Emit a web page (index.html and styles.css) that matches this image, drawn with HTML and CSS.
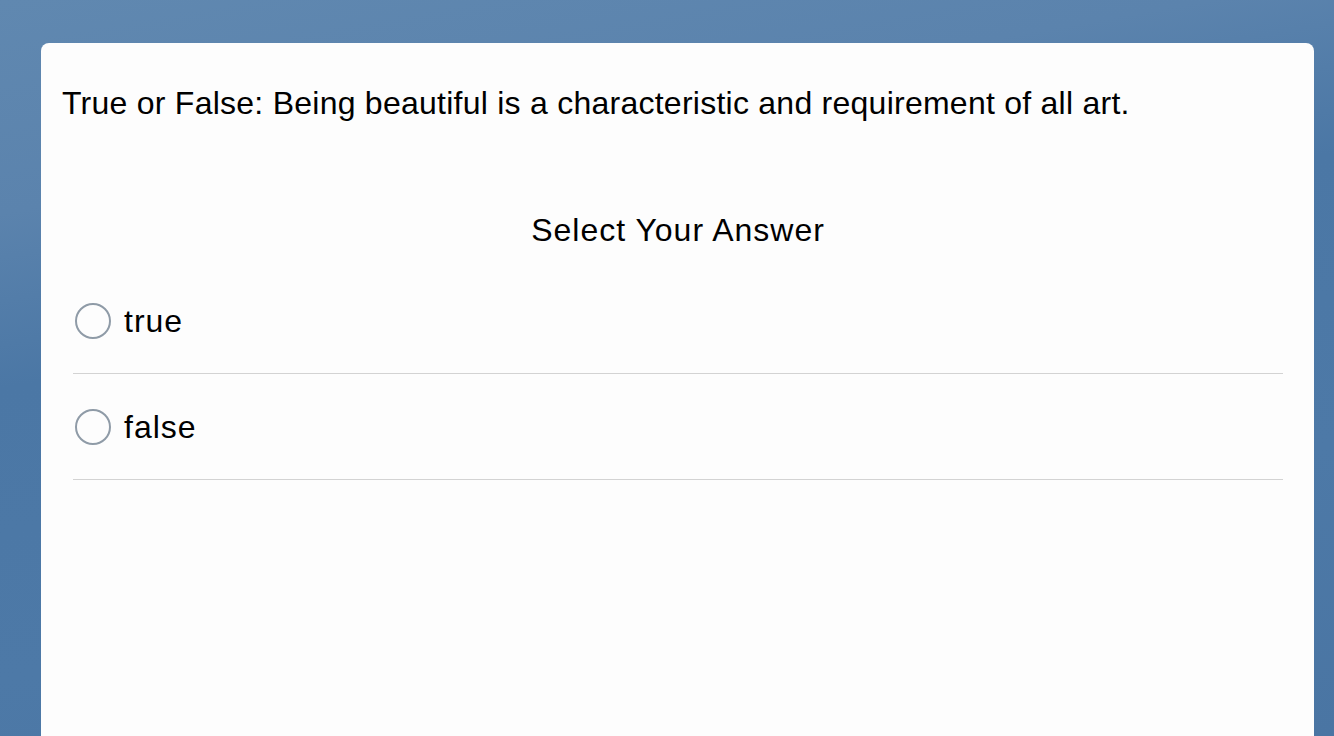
FILE: index.html
```html
<!DOCTYPE html>
<html>
<head>
<meta charset="utf-8">
<link rel="stylesheet" href="styles.css">
</head>
<body>
<div class="page">
  <div class="card">
    <p class="question">True or False: Being beautiful is a characteristic and requirement of all art.</p>
    <h2 class="prompt">Select Your Answer</h2>
    <ul class="options">
      <li class="option"><span class="radio"></span><span class="label">true</span></li>
      <li class="option"><span class="radio"></span><span class="label">false</span></li>
    </ul>
  </div>
</div>
</body>
</html>
```

FILE: styles.css
```css
html, body {
  margin: 0;
  padding: 0;
  height: 100%;
  overflow: hidden;
}
body {
  background: linear-gradient(170deg, #6088b0 0%, #5b83ad 22%, #4b77a5 40%, #4d79a7 70%, #4a75a3 100%);
  font-family: "Liberation Sans", Arial, sans-serif;
  color: #000;
}
.page {
  padding: 43px 20px 0 41px;
  height: 100%;
  box-sizing: border-box;
}
.card {
  background: #fdfdfd;
  border-radius: 8px 8px 0 0;
  height: 100%;
  padding: 41px 31px 0 21px;
  box-sizing: border-box;
}
.question {
  margin: 0;
  font-size: 32px;
  line-height: 38px;
  letter-spacing: 0.25px;
}
.prompt {
  margin: 89px 0 0 11px;
  font-size: 32px;
  font-weight: normal;
  line-height: 38px;
  text-align: center;
  letter-spacing: 1px;
}
.options {
  list-style: none;
  margin: 19px 0 0 11px;
  padding: 0;
}
.option {
  display: flex;
  align-items: center;
  height: 106px;
  box-sizing: border-box;
  border-bottom: 1px solid #d3d3d3;
  gap: 13px;
  padding-left: 2px;
}
.radio {
  width: 32px;
  height: 32px;
  border: 2px solid #8f9ba7;
  border-radius: 50%;
  flex: none;
}
.label {
  font-size: 32px;
  line-height: 38px;
  letter-spacing: 1px;
}
```
